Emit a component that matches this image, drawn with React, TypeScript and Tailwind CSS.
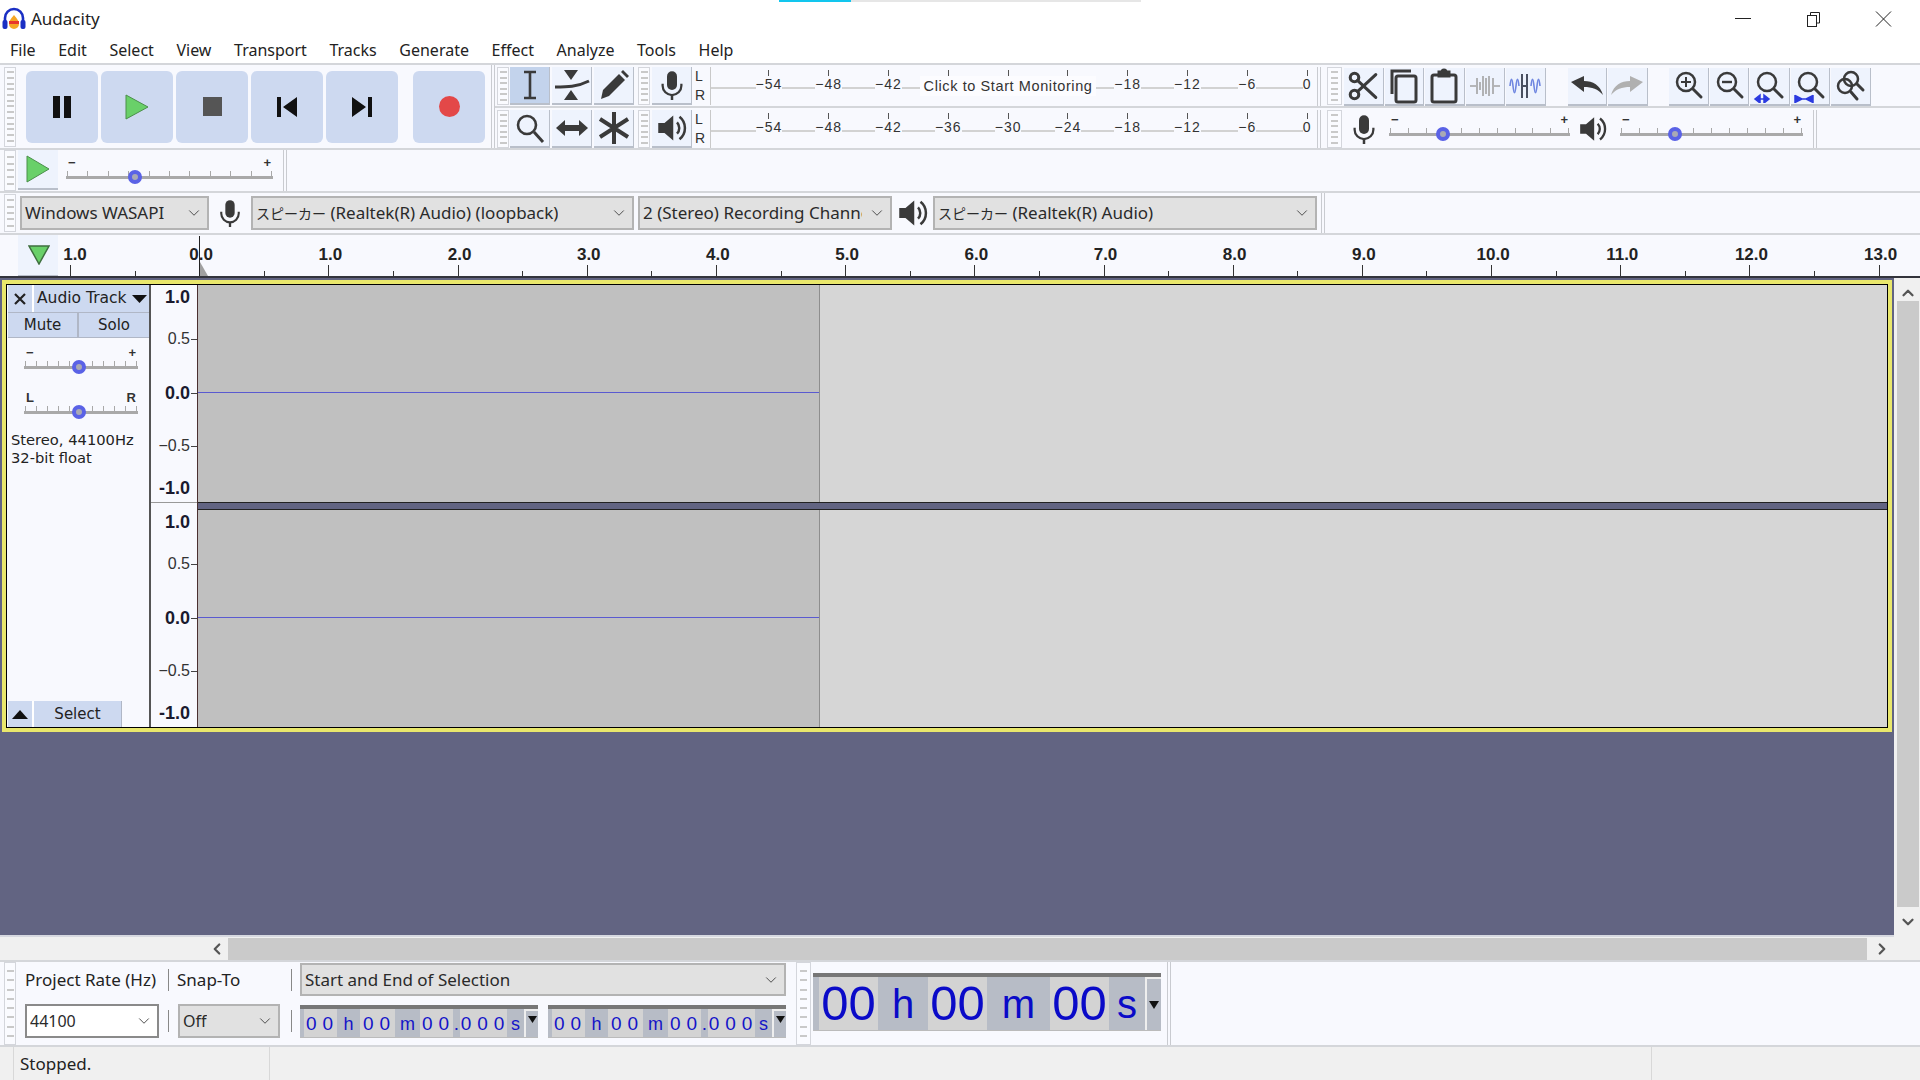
import { ChevronDown, ChevronLeft, ChevronRight, ChevronUp } from "lucide-react";

const INK = "#3a3a3a";

// dotted handle at the left of every toolbar
function Grip({ rows = 12, className = "" }: { rows?: number; className?: string }) {
  return (
    <div className={`flex flex-col items-center justify-evenly border border-[#d4d6dc] bg-[#fafbff] shrink-0 ${className}`}>
      {Array.from({ length: rows }).map((_, i) => (
        <div key={i} className="w-[7px] h-[2px] bg-[#c9c9c9]" />
      ))}
    </div>
  );
}

function ToolBtn({ children, active = false, className = "w-[40px]" }: { children?: React.ReactNode; active?: boolean; className?: string }) {
  return (
    <div className={`h-[38px] flex items-center justify-center shrink-0 border-b-2 border-r border-[#b9bfca] ${active ? "bg-[#c3d3ec]" : "bg-[#eef3fd]"} ${className}`}>
      {children}
    </div>
  );
}

function TransportBtn({ children }: { children: React.ReactNode }) {
  return <div className="w-[72px] h-[72px] rounded-[6px] bg-[#cdd9f0] flex items-center justify-center">{children}</div>;
}

function Hairline({ className = "" }: { className?: string }) {
  return <div className={`h-[2px] bg-[#d4d6da] shrink-0 ${className}`} />;
}

function DoubleSep({ className = "" }: { className?: string }) {
  return <div className={`w-[4px] self-stretch border-x border-[#c9cbd0] shrink-0 ${className}`} />;
}

function Slider({ width, pos, lo = "−", hi = "+", ticks = 11 }: { width: number; pos: number; lo?: string; hi?: string; ticks?: number }) {
  return (
    <div className="relative h-[32px] shrink-0" style={{ width }}>
      <div className="flex justify-between px-[2px] text-[13px] leading-[13px] font-bold text-[#333] font-['Liberation_Sans',sans-serif]">
        <span>{lo}</span>
        <span>{hi}</span>
      </div>
      <div className="flex justify-between h-[5px] mt-[2px] px-[1px]">
        {Array.from({ length: ticks }).map((_, i) => (
          <div key={i} className="w-px h-full bg-[#a8a8a8]" />
        ))}
      </div>
      <div className="h-[3px] bg-[#a9a9a9]" />
      <div
        className="absolute w-[14px] h-[14px] rounded-full border-[4px] border-[#5a62e6] bg-[#a9a9b4] -translate-x-1/2"
        style={{ left: pos, top: 14 }}
      />
    </div>
  );
}

function Combo({ className, children, white = false, small = false }: { className: string; children: React.ReactNode; white?: boolean; small?: boolean }) {
  return (
    <div className={`flex items-center justify-between pl-[3px] pr-[4px] shrink-0 ${white ? "bg-white border-2 border-[#8a8a8a]" : "bg-[#e1e1e1] border-2 border-[#b3b3b3]"} ${className}`}>
      <span className={`whitespace-nowrap overflow-hidden text-[#2a2a2a] ${small ? "text-[16px]" : "text-[17px]"}`}>{children}</span>
      <ChevronDown size={18} strokeWidth={1.25} className="shrink-0 text-[#444] ml-[6px]" />
    </div>
  );
}

function Jp({ children }: { children: React.ReactNode }) {
  return <span className="text-[14px]">{children}</span>;
}

function MicIcon({ size = 30 }: { size?: number }) {
  return (
    <svg width={size} height={size} viewBox="0 0 24 24" fill="none">
      <rect x="8" y="1" width="8" height="15" rx="4" fill={INK} />
      <path d="M4.5 11v1.5a7.5 7.5 0 0 0 15 0V11" stroke={INK} strokeWidth="1.8" />
      <path d="M12 20v4" stroke={INK} strokeWidth="2" />
    </svg>
  );
}

function SpeakerIcon({ size = 30 }: { size?: number }) {
  return (
    <svg width={size} height={size} viewBox="0 0 24 24" fill="none">
      <path d="M1 8h5l7-6v20l-7-6H1z" fill={INK} />
      <path d="M16 7.5a6.5 6.5 0 0 1 0 9" stroke={INK} strokeWidth="2" />
      <path d="M18 3a11.5 11.5 0 0 1 0 18" stroke={INK} strokeWidth="2" />
    </svg>
  );
}

function ZoomGlyph({ inner, under }: { inner?: React.ReactNode; under?: React.ReactNode }) {
  return (
    <svg width="34" height="34" viewBox="0 0 34 34" fill="none">
      <circle cx="15" cy="13" r="9" stroke={INK} strokeWidth="2.5" />
      <path d="M22 20l8 8" stroke={INK} strokeWidth="3" strokeLinecap="round" />
      {inner}
      {under}
    </svg>
  );
}

const meterLabels = ["−54", "−48", "−42", "−36", "−30", "−24", "−18", "−12", "−6", "0"];

function MeterCell({ label }: { label: string }) {
  return (
    <div className="w-[59.8px] shrink-0 flex flex-col items-center">
      <div className="w-px h-[6px] bg-[#555] mt-[3px]" />
      <span className="bg-[#f8f9fe] leading-[17px] h-[17px] tracking-[1px] text-[14px]">{label}</span>
    </div>
  );
}

function Meter({ monitor = false }: { monitor?: boolean }) {
  return (
    <div className="relative w-[603px] h-[38px] shrink-0 border-l border-[#c9c9c9] overflow-hidden">
      <div className="absolute left-0 right-[4px] top-[20px] h-[2px] bg-[#d2d2d2]" />
      <div className="relative flex pl-[28px] text-[#333] font-['Liberation_Sans',sans-serif]">
        {monitor ? (
          <>
            {meterLabels.slice(0, 3).map((m) => (
              <MeterCell key={m} label={m} />
            ))}
            <div className="w-[179.4px] shrink-0 flex flex-col items-center">
              <div className="w-full flex justify-around h-[6px] mt-[3px]">
                <div className="w-px h-full bg-[#555]" />
                <div className="w-px h-full bg-[#555]" />
                <div className="w-px h-full bg-[#555]" />
              </div>
              <span className="bg-[#fcfcff] w-[176px] text-center whitespace-nowrap leading-[20px] text-[14.5px] tracking-[0.6px]">Click to Start Monitoring</span>
            </div>
            {meterLabels.slice(6).map((m) => (
              <MeterCell key={m} label={m} />
            ))}
          </>
        ) : (
          meterLabels.map((m) => <MeterCell key={m} label={m} />)
        )}
      </div>
    </div>
  );
}

function LR() {
  return (
    <div className="w-[18px] h-[38px] shrink-0 flex flex-col justify-center gap-[6px] pl-[3px] text-[14px] leading-[13px] text-[#333] font-['Liberation_Sans',sans-serif]">
      <span>L</span>
      <span>R</span>
    </div>
  );
}

function TimeCell({ w, dark = false, children }: { w: number; dark?: boolean; children: React.ReactNode }) {
  return (
    <span className={`flex items-center justify-center h-full shrink-0 ${dark ? "bg-[#b7bcc6]" : "bg-[#d3d3d3]"}`} style={{ width: w }}>
      {children}
    </span>
  );
}

function SmallTime({ className = "" }: { className?: string }) {
  const digits = "tracking-[6px] pl-[4px] pt-[3px]";
  const unit = "text-[18px] pt-[3px]";
  return (
    <div className={`w-[238px] h-[33px] shrink-0 flex pl-[4px] bg-[#b7bcc6] border-t-[4px] border-[#777] border-b border-b-[#bbb] text-[#1414c8] text-[19px] font-['Liberation_Sans',sans-serif] ${className}`}>
      <TimeCell w={33}><span className={digits}>00</span></TimeCell>
      <TimeCell w={23} dark><span className={unit}>h</span></TimeCell>
      <TimeCell w={35}><span className={digits}>00</span></TimeCell>
      <TimeCell w={25} dark><span className={unit}>m</span></TimeCell>
      <TimeCell w={33}><span className={digits}>00</span></TimeCell>
      <TimeCell w={7} dark><span className="pt-[3px]">.</span></TimeCell>
      <TimeCell w={47}><span className={digits}>000</span></TimeCell>
      <TimeCell w={17} dark><span className={unit}>s</span></TimeCell>
      <div className="flex-1 border-l-2 border-t-2 border-[#eee] pt-[5px] pl-[2px]">
        <svg width="9" height="7" viewBox="0 0 9 7"><path d="M0 0h9L4.5 7z" fill="#111" /></svg>
      </div>
    </div>
  );
}

const rulerRows = [
  { label: "1.0", bold: true, h: 24, tick: false },
  { label: "0.5", bold: false, h: 60, tick: true },
  { label: "0.0", bold: true, h: 48, tick: true },
  { label: "−0.5", bold: false, h: 58, tick: true },
  { label: "-1.0", bold: true, h: 27, tick: false },
];

function VRuler({ className = "" }: { className?: string }) {
  return (
    <div className={`flex flex-col ${className}`}>
      {rulerRows.map((r) => (
        <div key={r.label} className="flex items-center justify-end gap-[1px]" style={{ height: r.h }}>
          <span className={r.bold ? "text-[18px] font-bold text-[#1a1a2e]" : "text-[16px] text-[#333]"}>{r.label}</span>
          <div className={`w-[6px] h-px ${r.tick ? "bg-[#444]" : ""}`} />
        </div>
      ))}
    </div>
  );
}

function Channel({ h, lineAt }: { h: number; lineAt: number }) {
  return (
    <div className="flex shrink-0" style={{ height: h }}>
      <div className="w-[622px] bg-[#c0c0c0] border-r border-[#8e8e8e]">
        <div className="border-b border-[#5a5ad0]" style={{ height: lineAt }} />
      </div>
      <div className="flex-1 bg-[#d6d6d6]" />
    </div>
  );
}

const timeline = ["1.0", "0.0", "1.0", "2.0", "3.0", "4.0", "5.0", "6.0", "7.0", "8.0", "9.0", "10.0", "11.0", "12.0", "13.0"];

export default function App() {
  return (
    <div className="w-[1920px] h-[1080px] flex flex-col overflow-hidden bg-[#f8f9fe] text-[#222] font-['Noto_Sans','Noto_Sans_CJK_JP',sans-serif]">
      {/* title bar */}
      <div className="h-[2px] pl-[779px] flex bg-white shrink-0">
        <div className="w-[72px] bg-[#12c6ee]" />
        <div className="w-[290px] bg-[#e6e6e6]" />
      </div>
      <div className="h-[33px] bg-white flex items-center shrink-0">
        <svg width="24" height="24" viewBox="0 0 24 24" className="ml-[2px]">
          <path d="M3 15V11a9 9 0 0 1 18 0v4" fill="none" stroke="#1a2fc4" strokeWidth="2.6" />
          <path d="M12 8c2 3 5 5 5 9a5 5 0 0 1-10 0c0-4 3-6 5-9z" fill="#f5a623" />
          <path d="M7 14h10v3H7z" fill="#e8352b" />
          <rect x="0.5" y="13" width="5" height="9" rx="2" fill="#1a2fc4" />
          <rect x="18.5" y="13" width="5" height="9" rx="2" fill="#1a2fc4" />
        </svg>
        <span className="ml-[5px] text-[17px]">Audacity</span>
        <div className="ml-auto flex items-center pr-[2px]">
          <div className="w-[70px] flex justify-center">
            <div className="w-[16px] h-px bg-[#222]" />
          </div>
          <div className="w-[70px] flex justify-center">
            <svg width="16" height="16" viewBox="0 0 16 16" fill="none" stroke="#222">
              <rect x="2.5" y="4.5" width="9" height="11" />
              <path d="M5.5 4V1.5h9V12H12" />
            </svg>
          </div>
          <div className="w-[70px] flex justify-center">
            <svg width="17" height="16" viewBox="0 0 17 16" fill="none" stroke="#222">
              <path d="M1 0.5l15 15M16 0.5l-15 15" />
            </svg>
          </div>
        </div>
      </div>
      <div className="h-[28px] bg-white flex items-center gap-[22.6px] px-[10px] pt-[2px] text-[16px] shrink-0">
        {["File", "Edit", "Select", "View", "Transport", "Tracks", "Generate", "Effect", "Analyze", "Tools", "Help"].map((m) => (
          <span key={m}>{m}</span>
        ))}
      </div>
      <Hairline />

      {/* transport, tools, meters, edit */}
      <div className="h-[83px] flex shrink-0">
        <div className="w-[491px] flex shrink-0 items-center pl-[4px]">
          <Grip rows={13} className="w-[12px] h-[80px]" />
          <div className="flex gap-[3px] ml-[10px]">
            <TransportBtn>
              <svg width="20" height="22" viewBox="0 0 20 22"><path d="M1 0h7v22H1zM12 0h7v22h-7z" fill="#111" /></svg>
            </TransportBtn>
            <TransportBtn>
              <svg width="24" height="26" viewBox="0 0 24 26"><path d="M1 1l22 12L1 25z" fill="#69d069" stroke="#4b8f4b" /></svg>
            </TransportBtn>
            <TransportBtn>
              <div className="w-[19px] h-[19px] bg-[#555]" />
            </TransportBtn>
            <TransportBtn>
              <svg width="20" height="20" viewBox="0 0 20 20"><path d="M0 0h4v20H0zM20 0v20L6 10z" fill="#111" /></svg>
            </TransportBtn>
            <TransportBtn>
              <svg width="20" height="20" viewBox="0 0 20 20"><path d="M20 0h-4v20h4zM0 0v20l14-10z" fill="#111" /></svg>
            </TransportBtn>
            <div className="w-[9px]" />
            <TransportBtn>
              <div className="w-[21px] h-[21px] rounded-full bg-[#e34848]" />
            </TransportBtn>
          </div>
        </div>
        <DoubleSep />
        <div className="flex-1 flex flex-col">
          {/* upper row */}
          <div className="h-[43px] flex items-start pt-[2px] border-b-2 border-[#d4d6da]">
            <Grip rows={6} className="w-[12px] h-[38px] ml-[2px] mr-[1px]" />
            <div className="flex gap-[2px]">
              <ToolBtn active>
                <svg width="18" height="30" viewBox="0 0 18 30" fill="none" stroke={INK} strokeWidth="2.6">
                  <path d="M3 2h12M3 28h12M9 2v26" />
                </svg>
              </ToolBtn>
              <ToolBtn>
                <svg width="36" height="32" viewBox="0 0 36 32">
                  <path d="M10 1h14l-7 10zM10 31h14l-7-10z" fill={INK} />
                  <path d="M1 18c12 0 22 0 34-6" fill="none" stroke={INK} strokeWidth="3" />
                </svg>
              </ToolBtn>
              <ToolBtn>
                <svg width="32" height="32" viewBox="0 0 32 32">
                  <path d="M3 30l2-9L21 5l6 6L11 27z" fill={INK} />
                  <path d="M23 3l2-2 6 6-2 2z" fill={INK} />
                </svg>
              </ToolBtn>
            </div>
            <Grip rows={6} className="w-[12px] h-[38px] ml-[4px] mr-[2px]" />
            <ToolBtn><MicIcon /></ToolBtn>
            <LR />
            <Meter monitor />
            <DoubleSep className="ml-[4px]" />
            <Grip rows={6} className="w-[15px] h-[38px] ml-[6px] mr-[2px]" />
            <div className="flex gap-[1px] mt-[1px]">
              <ToolBtn className="w-[39.5px]">
                <svg width="34" height="34" viewBox="0 0 24 24" fill="none" stroke={INK} strokeWidth="2.2" strokeLinecap="round">
                  <circle cx="6" cy="6" r="3" />
                  <circle cx="6" cy="18" r="3" />
                  <path d="M8.1 8.1L21 20M8.1 15.9L21 4" />
                </svg>
              </ToolBtn>
              <ToolBtn className="w-[39.5px]">
                <svg width="34" height="36" viewBox="0 0 34 36" fill="none" stroke={INK} strokeWidth="3">
                  <path d="M5 26V3h19" />
                  <rect x="9" y="8" width="20" height="26" rx="2" />
                </svg>
              </ToolBtn>
              <ToolBtn className="w-[39.5px]">
                <svg width="30" height="36" viewBox="0 0 30 36" fill="none" stroke={INK} strokeWidth="3">
                  <rect x="3" y="7" width="24" height="27" rx="2" />
                  <path d="M10 8V4h3a2 2 0 0 1 4 0h3v4z" fill={INK} />
                </svg>
              </ToolBtn>
              <ToolBtn className="w-[39.5px]">
                <svg width="32" height="26" viewBox="0 0 32 26" fill="none" stroke="#a2a2a2" strokeWidth="1.6">
                  <path d="M1 13h6M25 13h6M8 5v16M24 5v16M11 9v8M14 3v20M17 5v16M20 3v20" />
                </svg>
              </ToolBtn>
              <ToolBtn className="w-[39.5px]">
                <svg width="34" height="30" viewBox="0 0 34 30" fill="none" stroke="#6f86e0" strokeWidth="1.6">
                  <path d="M2 15c1-9 2-9 3 0s2 9 3 0 2-9 3 0M23 15c1-9 2-9 3 0s2 9 3 0 2-9 3 0" />
                  <path d="M14 3v24M19 3v24M14 15h5" stroke="#4a5060" strokeWidth="2" />
                </svg>
              </ToolBtn>
            </div>
            <div className="flex gap-[1px] ml-[22px] mt-[1px]">
              <ToolBtn className="w-[39.5px]">
                <svg width="34" height="24" viewBox="0 0 34 24" fill="none">
                  <path d="M1 8l13-6v5c9 0 16 4 19 14-5-6-11-8-19-8v5z" fill={INK} />
                </svg>
              </ToolBtn>
              <ToolBtn className="w-[39.5px]">
                <svg width="34" height="24" viewBox="0 0 34 24" fill="none">
                  <path d="M33 8L20 2v5C11 7 4 11 1 21c5-6 11-8 19-8v5z" fill="#b0b0b0" />
                </svg>
              </ToolBtn>
            </div>
            <div className="flex gap-[1px] ml-[21.5px] mt-[1px]">
              <ToolBtn className="w-[39.5px]">
                <ZoomGlyph inner={<path d="M10 13h10M15 8v10" stroke={INK} strokeWidth="2" />} />
              </ToolBtn>
              <ToolBtn className="w-[39.5px]">
                <ZoomGlyph inner={<path d="M10 13h10" stroke={INK} strokeWidth="2.4" />} />
              </ToolBtn>
              <ToolBtn className="w-[39.5px]">
                <ZoomGlyph under={<path d="M4 30h12M8 26l-5 4 5 4zM12 26l5 4-5 4z" fill="#2b3ae0" stroke="#2b3ae0" strokeWidth="1.5" />} />
              </ToolBtn>
              <ToolBtn className="w-[39.5px]">
                <ZoomGlyph under={<path d="M2 26v8M20 26v8M3 30h16M3 27l6 3-6 3zM19 27l-6 3 6 3z" fill="#2b3ae0" stroke="#2b3ae0" strokeWidth="1.5" />} />
              </ToolBtn>
              <ToolBtn className="w-[39.5px]">
                <svg width="34" height="34" viewBox="0 0 34 34" fill="none" stroke={INK} strokeWidth="2.5">
                  <circle cx="18" cy="10" r="7" />
                  <circle cx="12" cy="17" r="7" />
                  <path d="M18 23l6 7M24 15l6 6" strokeWidth="3" strokeLinecap="round" />
                </svg>
              </ToolBtn>
            </div>
          </div>
          {/* lower row */}
          <div className="h-[40px] flex items-start pt-[2px]">
            <Grip rows={6} className="w-[12px] h-[38px] ml-[2px] mr-[1px]" />
            <div className="flex gap-[2px]">
              <ToolBtn>
                <svg width="32" height="34" viewBox="0 0 32 34" fill="none" stroke={INK}>
                  <circle cx="13" cy="14" r="9" strokeWidth="2.6" />
                  <path d="M20 21l9 10" strokeWidth="3" />
                </svg>
              </ToolBtn>
              <ToolBtn>
                <svg width="32" height="18" viewBox="0 0 32 18"><path d="M0 9l9-8v5h14V1l9 8-9 8v-5H9v5z" fill={INK} /></svg>
              </ToolBtn>
              <ToolBtn>
                <svg width="32" height="34" viewBox="0 0 32 34" stroke={INK} strokeWidth="4">
                  <path d="M16 1v32M2 8l28 18M30 8L2 26" />
                </svg>
              </ToolBtn>
            </div>
            <Grip rows={6} className="w-[12px] h-[38px] ml-[4px] mr-[2px]" />
            <ToolBtn><SpeakerIcon /></ToolBtn>
            <LR />
            <Meter />
            <DoubleSep className="ml-[4px]" />
            <Grip rows={6} className="w-[15px] h-[38px] ml-[6px] mr-[2px]" />
            <div className="flex items-center h-[38px] self-stretch">
              <div className="w-[40px] flex justify-center"><MicIcon size={30} /></div>
              <div className="w-[5px]" />
              <Slider width={181} pos={54} />
              <div className="w-[50px] flex justify-center pr-[5px]"><SpeakerIcon size={28} /></div>
              <Slider width={183} pos={55} />
              <div className="w-[10px]" />
              <DoubleSep />
            </div>
          </div>
        </div>
      </div>
      <Hairline />

      {/* play at speed */}
      <div className="h-[41px] flex items-start shrink-0">
        <Grip rows={5} className="w-[12px] h-[41px] ml-[4px] mr-[2px]" />
        <div className="w-[40px] h-[40px] bg-[#eef3fd] border-b-2 border-[#b9bfca] flex items-center justify-center">
          <svg width="26" height="28" viewBox="0 0 26 28"><path d="M2 1l22 13L2 27z" fill="#69d069" stroke="#4b8f4b" /></svg>
        </div>
        <div className="ml-[8px] mt-[6px]">
          <Slider width={207} pos={69} />
        </div>
        <DoubleSep className="ml-[10px]" />
      </div>
      <Hairline />

      {/* devices */}
      <div className="h-[40px] flex items-center shrink-0">
        <Grip rows={5} className="w-[12px] h-[38px] ml-[4px] mr-[4px]" />
        <Combo className="w-[189px] h-[34px]">Windows WASAPI</Combo>
        <div className="w-[42px] flex justify-center"><MicIcon size={28} /></div>
        <Combo className="w-[383px] h-[34px]"><Jp>スピーカー</Jp> (Realtek(R) Audio) (loopback)</Combo>
        <Combo className="w-[254px] h-[34px] ml-[4px]">2 (Stereo) Recording Channels</Combo>
        <div className="w-[41px] flex justify-center"><SpeakerIcon size={30} /></div>
        <Combo className="w-[384px] h-[34px]"><Jp>スピーカー</Jp> (Realtek(R) Audio)</Combo>
        <DoubleSep className="ml-[4px]" />
      </div>
      <Hairline />

      {/* timeline */}
      <div className="h-[41px] flex shrink-0 bg-[#f8f9fe]">
        <div className="w-[18px] shrink-0" />
        <div className="w-[40px] h-full shrink-0 bg-[#eef3fd] border-b border-[#b9bfca] flex items-center justify-center pl-[2px]">
          <svg width="22" height="20" viewBox="0 0 22 20"><path d="M1 1h20L11 19z" fill="#69d069" stroke="#3f6f3f" strokeWidth="1.5" /></svg>
        </div>
        <div className="w-[12px] shrink-0" />
        <div className="flex-1 flex">
          {timeline.map((t, i) => (
            <div key={i} className="relative w-[129.2px] shrink-0 flex flex-col">
              <span className={`w-[60px] h-[30px] pt-[10px] flex items-center justify-center text-[17px] text-[#222] font-['Liberation_Sans',sans-serif] font-bold ${i === 0 ? "-ml-[25px]" : "-ml-[28px]"}`}>{t}</span>
              <div className="flex h-[11px] items-end">
                <div className="w-1/2 h-full border-l border-[#333]" />
                <div className="w-1/2 h-[5px] border-l border-[#333]" />
              </div>
              {t === "0.0" && (
                <>
                  <div className="absolute left-0 top-[1px] bottom-0 w-px bg-[#222]" />
                  <svg width="9" height="14" viewBox="0 0 9 14" className="absolute left-[1px] bottom-0"><path d="M0 0l8 14H0z" fill="#a0a0a0" /></svg>
                </>
              )}
            </div>
          ))}
        </div>
      </div>
      <div className="h-[2px] bg-[#33343c] shrink-0" />

      {/* tracks */}
      <div className="flex-1 flex min-h-0">
        <div className="flex-1 bg-[#626482] border-b-2 border-[#d6d8e0]">
          <div className="mt-[2px] ml-[2px] w-[1890px] h-[452px] border-[4px] border-[#e9e76c] bg-black p-[1px]">
            <div className="h-full flex bg-black">
              <div className="w-[144px] flex flex-col justify-between pl-[1px] bg-[#f8f9fe] border-r-2 border-[#555] shrink-0 font-['DejaVu_Sans',sans-serif]">
                <div>
                  <div className="flex">
                    <div className="w-[26px] h-[27px] bg-[#cdd9f0] border-r-2 border-white flex items-center justify-center">
                      <svg width="12" height="12" viewBox="0 0 12 12" stroke="#222" strokeWidth="2.2"><path d="M1 1l10 10M11 1L1 11" /></svg>
                    </div>
                    <div className="flex-1 h-[27px] bg-[#cdd9f0] flex items-center justify-between pl-[3px] pr-[2px] whitespace-nowrap overflow-hidden text-[15.5px]">
                      Audio Track
                      <svg width="15" height="8" viewBox="0 0 15 8" className="shrink-0"><path d="M0 0h15L7.5 8z" fill="#111" /></svg>
                    </div>
                  </div>
                  <div className="flex h-[26px] border-t border-[#b0b7c6] border-b">
                    <div className="w-[71px] bg-[#cdd9f0] border-r-2 border-[#b0b7c6] flex items-center justify-center text-[15px]">Mute</div>
                    <div className="flex-1 bg-[#cdd9f0] flex items-center justify-center text-[15px]">Solo</div>
                  </div>
                  <div className="pl-[16px] mt-[8px]">
                    <Slider width={114} pos={55} />
                  </div>
                  <div className="pl-[16px] mt-[13px]">
                    <Slider width={114} pos={55} lo="L" hi="R" />
                  </div>
                  <div className="pl-[3px] mt-[8px] text-[14.7px] leading-[18px] whitespace-nowrap">
                    Stereo, 44100Hz
                    <br />
                    32-bit float
                  </div>
                </div>
                <div className="flex h-[26px]">
                  <div className="w-[26px] bg-[#cdd9f0] border-r-2 border-white flex items-center justify-center">
                    <svg width="16" height="9" viewBox="0 0 16 9"><path d="M0 9h16L8 0z" fill="#111" /></svg>
                  </div>
                  <div className="w-[88px] bg-[#cdd9f0] border-r border-[#b0b7c6] flex items-center justify-center text-[15px]">Select</div>
                </div>
              </div>
              <div className="w-[46px] bg-[#f8f9fe] shrink-0 flex flex-col font-['Liberation_Sans',sans-serif]">
                <VRuler />
                <div className="h-[1px] bg-[#999] mb-[7px]" />
                <VRuler />
              </div>
              <div className="flex-1 flex flex-col min-w-0 border-l border-[#4a3030]">
                <Channel h={217} lineAt={108} />
                <div className="h-[8px] bg-[#626482] border-y border-[#222] shrink-0" />
                <Channel h={217} lineAt={108} />
              </div>
            </div>
          </div>
        </div>
        <div className="w-[26px] shrink-0 bg-[#f0f0f0] flex flex-col items-center pl-[1px]">
          <ChevronUp size={18} strokeWidth={3} className="text-[#555] mt-[6px] mb-[-1px]" />
          <div className="flex-1 w-[22px] bg-[#cacaca]" />
          <ChevronDown size={18} strokeWidth={3} className="text-[#555] my-[6px]" />
        </div>
      </div>

      {/* horizontal scroll */}
      <div className="h-[23px] bg-[#f0f0f0] flex items-center shrink-0 pl-[208px]">
        <ChevronLeft size={18} strokeWidth={3} className="text-[#555] mr-[2px]" />
        <div className="w-[1639px] h-[22px] bg-[#cacaca]" />
        <ChevronRight size={18} strokeWidth={3} className="text-[#555] ml-[6px]" />
      </div>
      <Hairline />

      {/* selection bar */}
      <div className="h-[83px] flex shrink-0 text-[17px]">
        <Grip rows={8} className="w-[12px] h-[83px] ml-[4px] mr-[9px]" />
        <div className="flex flex-col pt-[1px] gap-[8px]">
          <div className="flex items-center h-[33px]">
            <span className="w-[143px] whitespace-nowrap">Project Rate (Hz)</span>
            <div className="w-px h-[22px] bg-[#888]" />
            <span className="w-[122px] pl-[8px]">Snap-To</span>
            <div className="w-px h-[22px] bg-[#888]" />
            <Combo className="w-[486px] h-[33px] ml-[8px]">Start and End of Selection</Combo>
          </div>
          <div className="flex items-center h-[34px]">
            <Combo white small className="w-[134px] h-[34px] mr-[9px]">44100</Combo>
            <div className="w-px h-[22px] bg-[#888]" />
            <Combo small className="w-[102px] h-[34px] ml-[9px] mr-[11px]">Off</Combo>
            <div className="w-px h-[22px] bg-[#888]" />
            <SmallTime className="ml-[8px]" />
            <SmallTime className="ml-[10px]" />
          </div>
        </div>
        <Grip rows={8} className="w-[15px] h-[83px] ml-[10px]" />
        <div className="w-[348px] h-[58px] mt-[11px] ml-[2px] flex pl-[6px] bg-[#b7bcc6] border-t-[4px] border-b border-[#777] border-b-[#bbb] text-[#0a0ac8] text-[49px] leading-none font-['Liberation_Sans',sans-serif]">
          <TimeCell w={59}>00</TimeCell>
          <TimeCell w={50} dark><span className="text-[40px]">h</span></TimeCell>
          <TimeCell w={59}>00</TimeCell>
          <TimeCell w={63} dark><span className="text-[40px]">m</span></TimeCell>
          <TimeCell w={59}>00</TimeCell>
          <TimeCell w={36} dark><span className="text-[40px]">s</span></TimeCell>
          <div className="flex-1 border-l-2 border-t-2 border-[#eee] pt-[22px] pl-[2px]">
            <svg width="10" height="8" viewBox="0 0 10 8"><path d="M0 0h10L5 8z" fill="#111" /></svg>
          </div>
        </div>
        <DoubleSep className="ml-[6px]" />
      </div>
      <Hairline />

      {/* status */}
      <div className="h-[33px] shrink-0 bg-[#f0f0f0] flex text-[17px]">
        <div className="w-[14px] border-r border-[#d8d8d8]" />
        <div className="w-[256px] border-r border-[#d8d8d8] flex items-center pl-[6px]">Stopped.</div>
        <div className="w-[1382px] border-r border-[#d8d8d8]" />
      </div>
    </div>
  );
}
